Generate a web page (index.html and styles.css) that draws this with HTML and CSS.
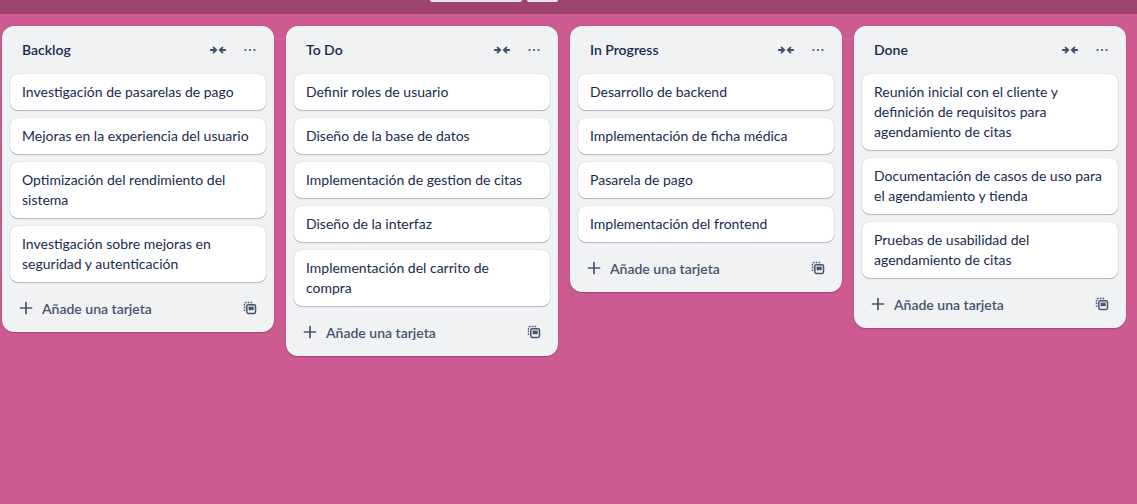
FILE: index.html
```html
<!DOCTYPE html>
<html lang="es">
<head>
<meta charset="utf-8">
<link rel="stylesheet" href="styles.css">
</head>
<body>
<div class="topbar">
  <div class="topbtn wide"></div>
  <div class="topbtn narrow"></div>
</div>
<main class="board">
  <section class="list">
    <header class="list-header">
      <h2 class="list-title">Backlog</h2>
      <button class="icon-btn" aria-label="Contraer"><svg width="16" height="16" viewBox="0 0 16 16"><path d="M0.5 8h5M3.5 5.5L6.2 8L3.5 10.5M15.5 8h-5M12.5 5.5L9.8 8l2.7 2.5" fill="none" stroke="currentColor" stroke-width="1.8" stroke-linecap="round" stroke-linejoin="round"/></svg></button>
      <button class="icon-btn" aria-label="Más"><svg width="16" height="16" viewBox="0 0 16 16"><circle cx="3.5" cy="8" r="1.1" fill="currentColor"/><circle cx="8" cy="8" r="1.1" fill="currentColor"/><circle cx="12.5" cy="8" r="1.1" fill="currentColor"/></svg></button>
    </header>
    <ol class="cards">
      <li class="card">Investigación de pasarelas de pago</li>
      <li class="card">Mejoras en la experiencia del usuario</li>
      <li class="card">Optimización del rendimiento del sistema</li>
      <li class="card">Investigación sobre mejoras en seguridad y autenticación</li>
    </ol>
    <footer class="list-footer">
      <button class="add-btn"><svg width="16" height="16" viewBox="0 0 16 16"><path d="M8 2.5v11M2.5 8h11" stroke="currentColor" stroke-width="1.7" stroke-linecap="round"/></svg><span>Añade una tarjeta</span></button>
      <button class="icon-btn" aria-label="Plantilla"><svg width="16" height="16" viewBox="0 0 16 16"><path d="M2.5 11V3.5a1 1 0 0 1 1-1H11" fill="none" stroke="currentColor" stroke-width="1.4" stroke-dasharray="1.6 1.2"/><rect x="4.8" y="4.8" width="8.7" height="8.7" rx="1.4" fill="none" stroke="currentColor" stroke-width="1.5"/><rect x="6.6" y="6.6" width="5.1" height="3.6" fill="currentColor"/></svg></button>
    </footer>
  </section>

  <section class="list">
    <header class="list-header">
      <h2 class="list-title">To Do</h2>
      <button class="icon-btn" aria-label="Contraer"><svg width="16" height="16" viewBox="0 0 16 16"><path d="M0.5 8h5M3.5 5.5L6.2 8L3.5 10.5M15.5 8h-5M12.5 5.5L9.8 8l2.7 2.5" fill="none" stroke="currentColor" stroke-width="1.8" stroke-linecap="round" stroke-linejoin="round"/></svg></button>
      <button class="icon-btn" aria-label="Más"><svg width="16" height="16" viewBox="0 0 16 16"><circle cx="3.5" cy="8" r="1.1" fill="currentColor"/><circle cx="8" cy="8" r="1.1" fill="currentColor"/><circle cx="12.5" cy="8" r="1.1" fill="currentColor"/></svg></button>
    </header>
    <ol class="cards">
      <li class="card">Definir roles de usuario</li>
      <li class="card">Diseño de la base de datos</li>
      <li class="card">Implementación de gestion de citas</li>
      <li class="card">Diseño de la interfaz</li>
      <li class="card">Implementación del carrito de compra</li>
    </ol>
    <footer class="list-footer">
      <button class="add-btn"><svg width="16" height="16" viewBox="0 0 16 16"><path d="M8 2.5v11M2.5 8h11" stroke="currentColor" stroke-width="1.7" stroke-linecap="round"/></svg><span>Añade una tarjeta</span></button>
      <button class="icon-btn" aria-label="Plantilla"><svg width="16" height="16" viewBox="0 0 16 16"><path d="M2.5 11V3.5a1 1 0 0 1 1-1H11" fill="none" stroke="currentColor" stroke-width="1.4" stroke-dasharray="1.6 1.2"/><rect x="4.8" y="4.8" width="8.7" height="8.7" rx="1.4" fill="none" stroke="currentColor" stroke-width="1.5"/><rect x="6.6" y="6.6" width="5.1" height="3.6" fill="currentColor"/></svg></button>
    </footer>
  </section>

  <section class="list">
    <header class="list-header">
      <h2 class="list-title">In Progress</h2>
      <button class="icon-btn" aria-label="Contraer"><svg width="16" height="16" viewBox="0 0 16 16"><path d="M0.5 8h5M3.5 5.5L6.2 8L3.5 10.5M15.5 8h-5M12.5 5.5L9.8 8l2.7 2.5" fill="none" stroke="currentColor" stroke-width="1.8" stroke-linecap="round" stroke-linejoin="round"/></svg></button>
      <button class="icon-btn" aria-label="Más"><svg width="16" height="16" viewBox="0 0 16 16"><circle cx="3.5" cy="8" r="1.1" fill="currentColor"/><circle cx="8" cy="8" r="1.1" fill="currentColor"/><circle cx="12.5" cy="8" r="1.1" fill="currentColor"/></svg></button>
    </header>
    <ol class="cards">
      <li class="card">Desarrollo de backend</li>
      <li class="card">Implementación de ficha médica</li>
      <li class="card">Pasarela de pago</li>
      <li class="card">Implementación del frontend</li>
    </ol>
    <footer class="list-footer">
      <button class="add-btn"><svg width="16" height="16" viewBox="0 0 16 16"><path d="M8 2.5v11M2.5 8h11" stroke="currentColor" stroke-width="1.7" stroke-linecap="round"/></svg><span>Añade una tarjeta</span></button>
      <button class="icon-btn" aria-label="Plantilla"><svg width="16" height="16" viewBox="0 0 16 16"><path d="M2.5 11V3.5a1 1 0 0 1 1-1H11" fill="none" stroke="currentColor" stroke-width="1.4" stroke-dasharray="1.6 1.2"/><rect x="4.8" y="4.8" width="8.7" height="8.7" rx="1.4" fill="none" stroke="currentColor" stroke-width="1.5"/><rect x="6.6" y="6.6" width="5.1" height="3.6" fill="currentColor"/></svg></button>
    </footer>
  </section>

  <section class="list">
    <header class="list-header">
      <h2 class="list-title">Done</h2>
      <button class="icon-btn" aria-label="Contraer"><svg width="16" height="16" viewBox="0 0 16 16"><path d="M0.5 8h5M3.5 5.5L6.2 8L3.5 10.5M15.5 8h-5M12.5 5.5L9.8 8l2.7 2.5" fill="none" stroke="currentColor" stroke-width="1.8" stroke-linecap="round" stroke-linejoin="round"/></svg></button>
      <button class="icon-btn" aria-label="Más"><svg width="16" height="16" viewBox="0 0 16 16"><circle cx="3.5" cy="8" r="1.1" fill="currentColor"/><circle cx="8" cy="8" r="1.1" fill="currentColor"/><circle cx="12.5" cy="8" r="1.1" fill="currentColor"/></svg></button>
    </header>
    <ol class="cards">
      <li class="card">Reunión inicial con el cliente y definición de requisitos para agendamiento de citas</li>
      <li class="card">Documentación de casos de uso para el agendamiento y tienda</li>
      <li class="card">Pruebas de usabilidad del agendamiento de citas</li>
    </ol>
    <footer class="list-footer">
      <button class="add-btn"><svg width="16" height="16" viewBox="0 0 16 16"><path d="M8 2.5v11M2.5 8h11" stroke="currentColor" stroke-width="1.7" stroke-linecap="round"/></svg><span>Añade una tarjeta</span></button>
      <button class="icon-btn" aria-label="Plantilla"><svg width="16" height="16" viewBox="0 0 16 16"><path d="M2.5 11V3.5a1 1 0 0 1 1-1H11" fill="none" stroke="currentColor" stroke-width="1.4" stroke-dasharray="1.6 1.2"/><rect x="4.8" y="4.8" width="8.7" height="8.7" rx="1.4" fill="none" stroke="currentColor" stroke-width="1.5"/><rect x="6.6" y="6.6" width="5.1" height="3.6" fill="currentColor"/></svg></button>
    </footer>
  </section>
</main>
</body>
</html>
```
FILE: styles.css
```css
* { box-sizing: border-box; }
html, body {
  margin: 0;
  padding: 0;
  height: 100%;
}
body {
  background: #cd5a91;
  font-family: Lato, "Noto Sans", "Liberation Sans", sans-serif;
  font-size: 14px;
  color: #172b4d;
  overflow: hidden;
}
.topbar {
  height: 14px;
  background: #9e446c;
  display: flex;
  align-items: flex-start;
  padding-left: 430px;
  gap: 5px;
}
.topbtn {
  height: 2px;
  background: #e4e6ea;
  border-radius: 0 0 3px 3px;
}
.topbtn.wide { width: 92px; }
.topbtn.narrow { width: 31px; }

.board {
  display: flex;
  align-items: flex-start;
  gap: 12px;
  padding: 12px 2px;
}
.list {
  flex: 0 0 272px;
  width: 272px;
  background: #f1f2f4;
  border-radius: 12px;
  box-shadow: 0 1px 1px rgba(9, 30, 66, 0.25), 0 0 1px rgba(9, 30, 66, 0.31);
  padding-bottom: 6px;
}
.list-header {
  display: flex;
  align-items: center;
  padding: 8px 8px 0;
  height: 40px;
}
.list-title {
  flex: 1;
  margin: 0;
  padding-left: 12px;
  font-size: 14px;
  font-weight: 600;
  line-height: 20px;
  color: #172b4d;
}
.icon-btn {
  width: 32px;
  height: 32px;
  border: 0;
  background: transparent;
  padding: 0;
  display: flex;
  align-items: center;
  justify-content: center;
  color: #44546f;
  border-radius: 8px;
}
.cards {
  list-style: none;
  margin: 0;
  padding: 8px 8px 0;
  display: flex;
  flex-direction: column;
  gap: 8px;
}
.card {
  background: #fff;
  border-radius: 8px;
  padding: 8px 12px;
  line-height: 20px;
  font-size: 14px;
  color: #172b4d;
  box-shadow: 0 1px 1px rgba(9, 30, 66, 0.25), 0 0 1px rgba(9, 30, 66, 0.31);
}
.list-footer {
  display: flex;
  align-items: center;
  padding: 8px 8px 0;
}
.add-btn {
  flex: 1;
  height: 36px;
  border: 0;
  background: transparent;
  display: flex;
  align-items: center;
  gap: 8px;
  padding: 0 8px;
  font-family: inherit;
  font-size: 14px;
  font-weight: 600;
  color: #44546f;
  text-align: left;
}
.list-footer .icon-btn { height: 36px; }
```
